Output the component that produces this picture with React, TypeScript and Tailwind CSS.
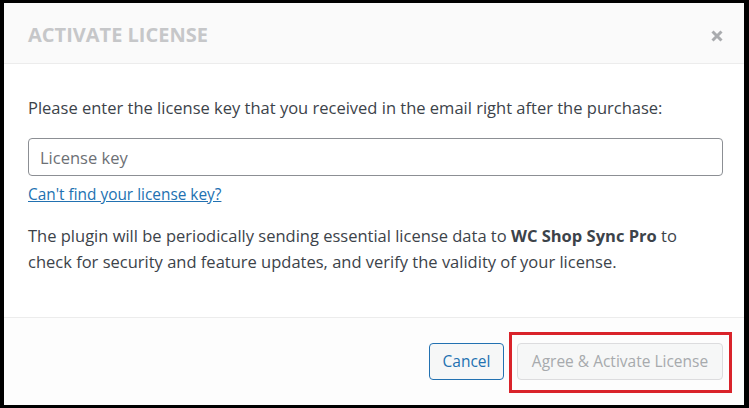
const App = () => {
    return (
        <div className="w-[749px] h-[408px] bg-black pt-[3px] pl-[4px] pr-[5px] pb-[3px] font-['Open_Sans',sans-serif]">
            <div className="flex flex-col h-full bg-white">
                <div className="flex items-center justify-between h-[61px] pl-6 pr-[21px] pt-[3px] bg-[#fafafa] border-b border-[#ececec]">
                    <h1 className="text-[20px] font-bold text-[#c6c7c9]">ACTIVATE LICENSE</h1>
                    <svg width="12" height="12" viewBox="0 0 12 12" className="mt-[2px] text-[#a9abae]">
                        <path d="M1.5 1.5 L10.5 10.5 M10.5 1.5 L1.5 10.5" stroke="currentColor" strokeWidth="3" />
                    </svg>
                </div>
                <div className="flex-1 pl-6 pr-[21px] pt-[31px] text-[16.5px] text-[#3c434a]">
                    <p className="leading-[26px]">
                        Please enter the license key that you received in the email right after the purchase:
                    </p>
                    <input
                        type="text"
                        placeholder="License key"
                        className="mt-[17px] block w-full h-[38px] px-[11px] text-[16.5px] rounded-[4px] border border-[#8c8f94] bg-white placeholder:text-[#6d7075] outline-none"
                    />
                    <a href="#" className="block mt-[9px] leading-[20px] text-[15.4px] text-[#2271b1] underline">
                        Can't find your license key?
                    </a>
                    <p className="mt-[18px] leading-[26px]">
                        The plugin will be periodically sending essential license data to <b className="font-bold">WC Shop Sync Pro</b> to
                        <br />
                        check for security and feature updates, and verify the validity of your license.
                    </p>
                </div>
                <div className="flex items-center justify-end gap-[13px] h-[88px] pr-[21px] bg-[#fdfdfd] border-t border-[#ececec]">
                    <button className="h-[37px] w-[75px] text-[15.5px] text-[#2271b1] bg-[#f6f7f7] border border-[#2271b1] rounded-[4px]">
                        Cancel
                    </button>
                    <div className="relative">
                        <button className="h-[37px] w-[206px] text-[15.5px] text-[#a7aaad] bg-[#f6f7f7] border border-[#dcdcde] rounded-[4px]">
                            Agree &amp; Activate License
                        </button>
                        <div className="absolute -left-[8px] -right-[9px] -top-[11px] -bottom-[13px] border-[3px] border-[#d9232a] pointer-events-none" />
                    </div>
                </div>
            </div>
        </div>
    );
};

export default App;
